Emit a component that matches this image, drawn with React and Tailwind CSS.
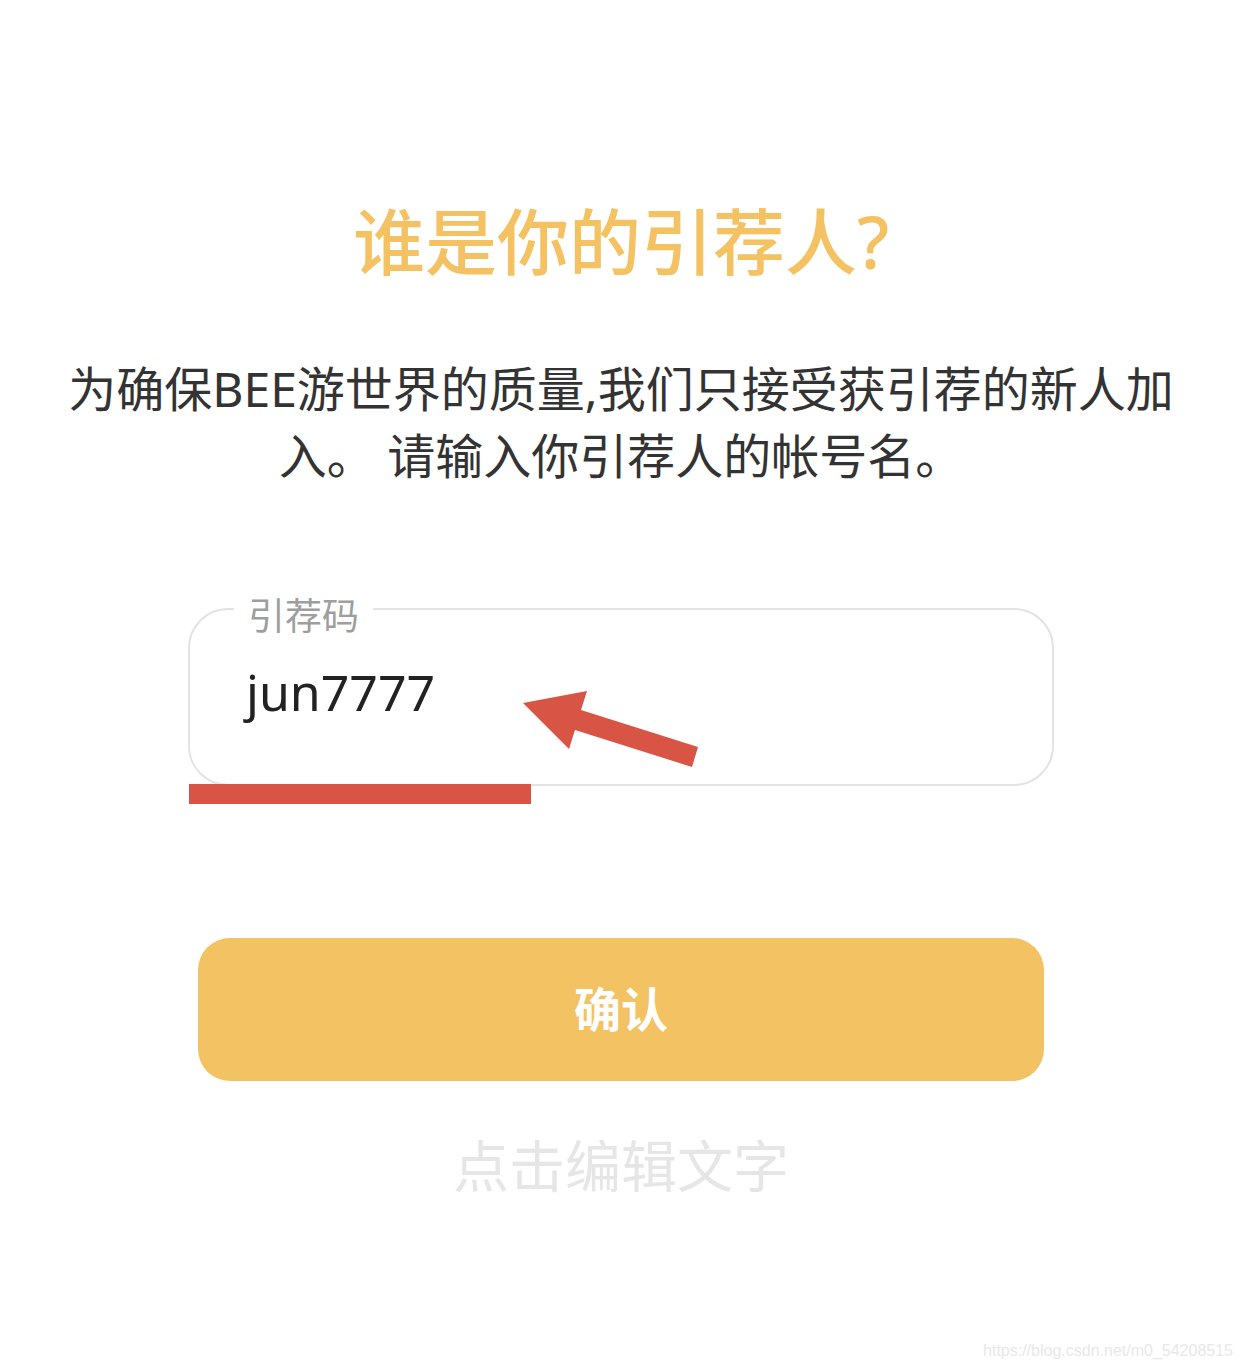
import React from "react";

const CJK = { fontFamily: '"Noto Sans", "Noto Sans CJK SC", sans-serif' };

export default function App() {
  return (
    <div
      className="relative w-full min-h-[1370px] bg-white flex flex-col items-center"
      style={CJK}
    >
      <h1 className="mt-[205px] text-[72px] leading-[72px] font-medium text-[#f4c262]">
        谁是你的引荐人?
      </h1>

      <p className="mt-[78px] text-[48px] leading-[67px] text-[#333333] text-center whitespace-nowrap">
        为确保BEE游世界的质量,我们只接受获引荐的新人加
        <br />
        入。 请输入你引荐人的帐号名。
      </p>

      <div className="relative mt-[119px] w-[866px] h-[178px]">
        <div className="h-full w-full rounded-[40px] border-2 border-[#e3e3e3] pl-[56px] pt-[52px]">
          <span className="text-[50px] leading-[60px] text-[#222222]">jun7777</span>
        </div>
        <span className="absolute left-[46px] top-[-14px] bg-white px-[14px] text-[37px] leading-[44px] text-[#9e9e9e]">
          引荐码
        </span>
        <svg
          className="absolute left-[312px] top-[63px]"
          width="220"
          height="110"
          viewBox="0 0 220 110"
        >
          <polygon
            points="23,32 87,20 81,39 198,76 192,96 75,59 69,78"
            fill="#d85545"
          />
        </svg>
        <div className="absolute left-[1px] top-[176px] w-[342px] h-[20px] bg-[#d85545]" />
      </div>

      <button className="mt-[152px] w-[846px] h-[143px] rounded-[32px] bg-[#f3c262] text-white text-[47px] font-bold">
        确认
      </button>

      <div className="mt-[56px] text-[56px] leading-[56px] text-[#e6e6e6]">
        点击编辑文字
      </div>

      <div
        className="absolute right-[9px] top-[1340px] text-[16px] leading-[22px] text-[#e8e8e8]"
        style={{ fontFamily: '"Liberation Sans", Arial, sans-serif' }}
      >
        https://blog.csdn.net/m0_54208515
      </div>
    </div>
  );
}
